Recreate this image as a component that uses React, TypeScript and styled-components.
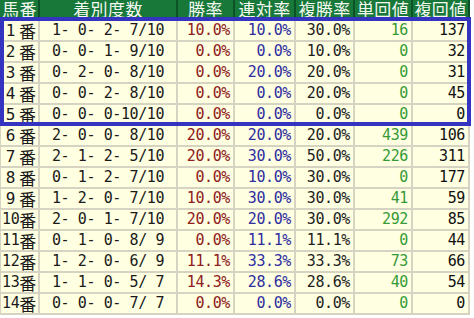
import React from 'react'
import styled, { createGlobalStyle } from 'styled-components'

const GlobalStyle = createGlobalStyle`
  body {
    margin: 0;
    background: #ffffff;
  }
`

type Row = {
  no: number
  record: string
  win: string
  rentai: string
  fukusho: string
  tanka: string
  fukuka: string
}

const rows: Row[] = [
  { no: 1, record: '1- 0- 2- 7/10', win: '10.0%', rentai: '10.0%', fukusho: '30.0%', tanka: '16', fukuka: '137' },
  { no: 2, record: '0- 0- 1- 9/10', win: '0.0%', rentai: '0.0%', fukusho: '10.0%', tanka: '0', fukuka: '32' },
  { no: 3, record: '0- 2- 0- 8/10', win: '0.0%', rentai: '20.0%', fukusho: '20.0%', tanka: '0', fukuka: '31' },
  { no: 4, record: '0- 0- 2- 8/10', win: '0.0%', rentai: '0.0%', fukusho: '20.0%', tanka: '0', fukuka: '45' },
  { no: 5, record: '0- 0- 0-10/10', win: '0.0%', rentai: '0.0%', fukusho: '0.0%', tanka: '0', fukuka: '0' },
  { no: 6, record: '2- 0- 0- 8/10', win: '20.0%', rentai: '20.0%', fukusho: '20.0%', tanka: '439', fukuka: '106' },
  { no: 7, record: '2- 1- 2- 5/10', win: '20.0%', rentai: '30.0%', fukusho: '50.0%', tanka: '226', fukuka: '311' },
  { no: 8, record: '0- 1- 2- 7/10', win: '0.0%', rentai: '10.0%', fukusho: '30.0%', tanka: '0', fukuka: '177' },
  { no: 9, record: '1- 2- 0- 7/10', win: '10.0%', rentai: '30.0%', fukusho: '30.0%', tanka: '41', fukuka: '59' },
  { no: 10, record: '2- 0- 1- 7/10', win: '20.0%', rentai: '20.0%', fukusho: '30.0%', tanka: '292', fukuka: '85' },
  { no: 11, record: '0- 1- 0- 8/ 9', win: '0.0%', rentai: '11.1%', fukusho: '11.1%', tanka: '0', fukuka: '44' },
  { no: 12, record: '1- 2- 0- 6/ 9', win: '11.1%', rentai: '33.3%', fukusho: '33.3%', tanka: '73', fukuka: '66' },
  { no: 13, record: '1- 1- 0- 5/ 7', win: '14.3%', rentai: '28.6%', fukusho: '28.6%', tanka: '40', fukuka: '54' },
  { no: 14, record: '0- 0- 0- 7/ 7', win: '0.0%', rentai: '0.0%', fukusho: '0.0%', tanka: '0', fukuka: '0' },
]

const Wrap = styled.div`
  position: relative;
  width: 470px;
`

const Grid = styled.div`
  display: grid;
  grid-template-columns: 40px 138px 57px 61px 59px 58px 57px;
  grid-template-rows: 21px repeat(14, 21px);
`

const HeadCell = styled.div<{ $align?: 'left' | 'center' }>`
  box-sizing: border-box;
  background: #17783a;
  color: #f4f8f0;
  font-family: 'Noto Sans CJK JP', sans-serif;
  font-size: 17px;
  letter-spacing: 0.4px;
  line-height: 1;
  height: 21px;
  padding: 0 0 5px ${p => (p.$align === 'left' ? '2px' : '0')};
  display: flex;
  align-items: center;
  justify-content: ${p => (p.$align === 'left' ? 'flex-start' : 'center')};
  border-right: 2px solid #0b5226;
  white-space: nowrap;
`

const Cell = styled.div<{ $color?: string; $align?: 'left' | 'center' | 'right'; $first?: boolean }>`
  box-sizing: border-box;
  background: #ffffe2;
  color: ${p => p.$color || '#1a1a1a'};
  font-family: 'DejaVu Sans Mono', 'Noto Sans CJK JP', monospace;
  font-size: 15px;
  letter-spacing: -0.4px;
  line-height: 1;
  height: 21px;
  display: flex;
  align-items: center;
  justify-content: ${p => (p.$align === 'left' ? 'flex-start' : p.$align === 'center' ? 'center' : 'flex-end')};
  padding: ${p => (p.$align === 'left' ? '0 0 0 1px' : p.$align === 'center' ? '0' : '0 3px 0 0')};
  border-right: 2px solid #d6d3c2;
  border-bottom: 2px solid #d6d3c2;
  border-left: ${p => (p.$first ? '1px solid #d6d3c2' : 'none')};
  white-space: pre;
`

const HorseNo = styled.span`
  display: flex;
  align-items: center;
  line-height: 1;
  color: #1a1a1a;
`

const Digit = styled.span<{ $wide: boolean }>`
  display: inline-block;
  width: ${p => (p.$wide ? '17px' : 'auto')};
  text-align: center;
  font-size: ${p => (p.$wide ? '16px' : '15px')};
  letter-spacing: ${p => (p.$wide ? '0' : '-0.4px')};
`

const Kanji = styled.span`
  font-family: 'Noto Sans CJK JP', sans-serif;
  font-size: 17px;
  line-height: 1;
  letter-spacing: 0;
`

const Highlight = styled.div`
  position: absolute;
  left: 0;
  top: 17px;
  width: 471px;
  height: 109px;
  box-sizing: border-box;
  border: 4px solid #3434c0;
  pointer-events: none;
`

const colors = {
  win: '#8e2020',
  rentai: '#2e2e9e',
  fukusho: '#1e1e1e',
  tanka: '#369a36',
  fukuka: '#111111',
}

const App: React.FC = () => (
  <>
    <GlobalStyle />
    <Wrap>
      <Grid>
        <HeadCell $align="left">馬番</HeadCell>
        <HeadCell>着別度数</HeadCell>
        <HeadCell>勝率</HeadCell>
        <HeadCell>連対率</HeadCell>
        <HeadCell>複勝率</HeadCell>
        <HeadCell>単回値</HeadCell>
        <HeadCell>複回値</HeadCell>
        {rows.map(r => (
          <React.Fragment key={r.no}>
            <Cell $align="left" $first>
              <HorseNo>
                <Digit $wide={r.no < 10}>{r.no}</Digit>
                <Kanji>番</Kanji>
              </HorseNo>
            </Cell>
            <Cell $align="center">{r.record}</Cell>
            <Cell $color={colors.win}>{r.win}</Cell>
            <Cell $color={colors.rentai}>{r.rentai}</Cell>
            <Cell $color={colors.fukusho}>{r.fukusho}</Cell>
            <Cell $color={colors.tanka}>{r.tanka}</Cell>
            <Cell $color={colors.fukuka}>{r.fukuka}</Cell>
          </React.Fragment>
        ))}
      </Grid>
      <Highlight />
    </Wrap>
  </>
)

export default App
